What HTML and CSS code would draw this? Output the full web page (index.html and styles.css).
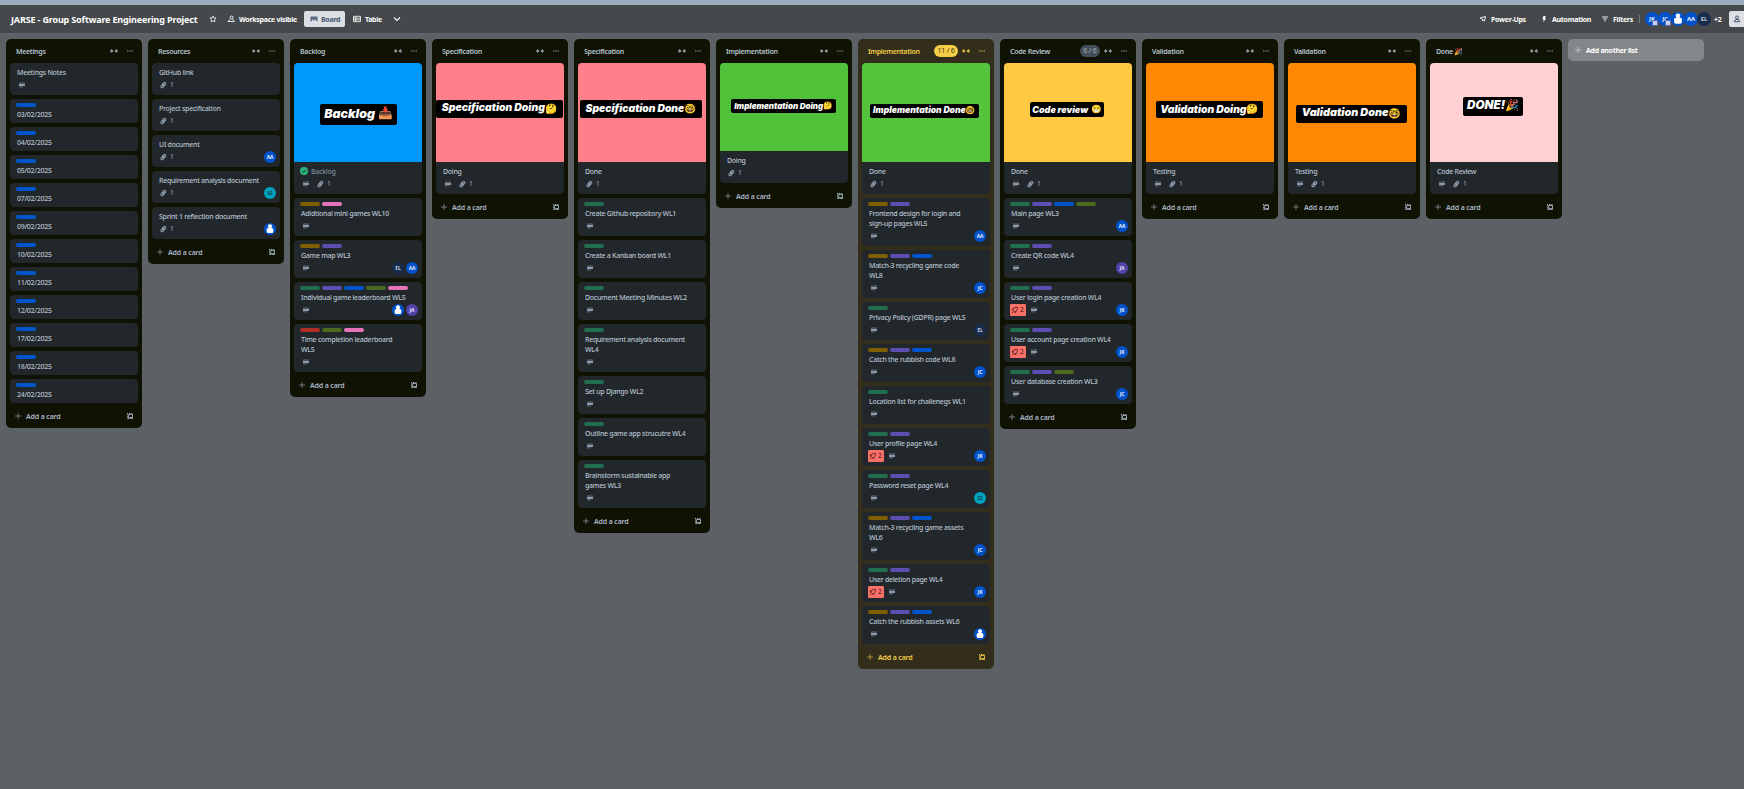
FILE: index.html
```html
<!DOCTYPE html>
<html lang="en">
<head>
<meta charset="utf-8">
<title>JARSE - Group Software Engineering Project</title>
<link rel="stylesheet" href="styles.css">
</head>
<body>
<svg class="sprite" aria-hidden="true">
  <symbol id="i-desc" viewBox="0 0 8 8"><path d="M1 1.300h6V3H1zM1 5h4v1.500H1z" fill="currentColor" opacity=".4"/><path d="M1 3h6v2H1z" fill="currentColor"/></symbol>
  <symbol id="i-clip" viewBox="0 0 8 8"><path d="M2.300 4.600L4.600 1.900A1.200 1.200 0 0 1 6.500 3.400L4 6.300A1.300 1.300 0 0 1 1.900 4.900M3.400 5.200L5.300 3" fill="none" stroke="currentColor" stroke-width="1.200"/></symbol>
  <symbol id="i-collapse" viewBox="0 0 8 8"><path d="M0 4h2M6 4h2" stroke="currentColor" stroke-width="1"/><path d="M1.200 2 3.500 4 1.200 6zM6.800 2 4.500 4l2.300 2z" fill="currentColor"/></symbol>
  <symbol id="i-more" viewBox="0 0 8 8"><path d="M1 3.500h1.400v1H1zM3.300 3.500h1.400v1H3.300zM5.600 3.500H7v1H5.600z" fill="currentColor" opacity=".85"/></symbol>
  <symbol id="i-plus" viewBox="0 0 8 8"><path d="M4 1v6M1 4h6" stroke="currentColor" stroke-width=".8" opacity=".75"/></symbol>
  <symbol id="i-tpl" viewBox="0 0 8 8"><path d="M2.600 2.500h3.900v4h-2M2.600 2.500v3h2v1M1 1.500h1M3 1.500h1.400M5.400 1.500h1.100M1.500 1v1.500M1.500 3.500v1.300M1.500 5.600v.9h2M5 5.500h1" fill="none" stroke="currentColor" stroke-width=".9"/></symbol>
  <symbol id="i-rocket" viewBox="0 0 8 8"><path d="M2.400 3C3.200 1.600 4.600 1.200 6.500 1.300c.1 1.900-.4 3.300-1.800 4.200L3.300 6 1.900 4.600zM2.400 2.600L1.200 3.200l.7 1.200M5.100 5.300L4.700 6.700 3.500 6M1 7l1-1" fill="none" stroke="currentColor" stroke-width=".9"/></symbol>
  <symbol id="i-person" viewBox="0 0 12 12"><circle cx="6" cy="3.300" r="2" fill="#fff"/><rect x="2.700" y="5" width="6.600" height="5" rx="1.500" fill="#fff"/></symbol>
</svg>
<div class="topstrip"></div>
<header class="bar">
  <h1 class="name">JARSE - Group Software Engineering Project</h1>
  <svg class="star" viewBox="0 0 8 8"><path d="M4 .9l.9 2 2.200.2-1.600 1.500.4 2.200L4 5.700 2.100 6.800l.4-2.200L.9 3.100l2.200-.2z" fill="none" stroke="currentColor" stroke-width=".8"/></svg>
  <div class="visible"><svg viewBox="0 0 8 8"><circle cx="4.600" cy="2.400" r="1.400" fill="none" stroke="currentColor" stroke-width=".9"/><path d="M.8 6.500L3.600 3.800M.8 6.500h6.400c0-1-.6-1.900-1.900-2.300" fill="none" stroke="currentColor" stroke-width=".9"/></svg><span>Workspace visible</span></div>
  <div class="boardbtn"><svg viewBox="0 0 8 8"><path d="M.5 1.500h7v4.700H6V4.500H5V5.300H3V4.500H2v1.700H.5z" fill="currentColor" opacity=".85"/></svg><span>Board</span></div>
  <div class="tablebtn"><svg viewBox="0 0 8 8"><path d="M.5 1.300h7v5.400h-7zM.5 3.100h7M.5 4.900h7M2.800 1.300v5.400" fill="none" stroke="currentColor" stroke-width=".8"/></svg><span>Table</span></div>
  <svg class="chev" viewBox="0 0 8 8"><path d="M1 2.500l3 3 3-3" fill="none" stroke="currentColor" stroke-width="1.100"/></svg>
  <div class="right">
    <div class="act a1"><svg viewBox="0 0 8 8"><path d="M1.200 3L6.500 1.500 5.400 6.200 3.900 4.600zM3.700 4.600v1.600" fill="none" stroke="currentColor" stroke-width=".9"/></svg><span>Power-Ups</span></div>
    <div class="act a2"><svg viewBox="0 0 8 8"><path d="M3.500 1h2.200L5 3.200h1.200L3.200 7.300l.5-3H2.300z" fill="currentColor"/></svg><span>Automation</span></div>
    <div class="act a3"><svg viewBox="0 0 8 8"><path d="M1 2h6M2.200 4h3.600M3.300 6h1.400" stroke="currentColor" stroke-width=".9"/></svg><span>Filters</span></div>
    <i class="sep"></i>
    <div class="team" id="team"></div>
    <span class="plus2">+2</span>
    <div class="share"><svg viewBox="0 0 8 8"><circle cx="4" cy="2.500" r="1.500" fill="none" stroke="currentColor"/><path d="M1.200 6.700c0-3 5.600-3 5.600 0z" fill="none" stroke="currentColor"/></svg><span>Share</span></div>
  </div>
</header>
<main class="board" id="board"></main>
<script src="app.js"></script>
</body>
</html>
```
FILE: styles.css
```css
* { box-sizing: border-box; }
html, body { margin: 0; height: 100%; }
body {
  width: 1744px; height: 789px; overflow: hidden;
  background: #5c6165;
  font: 500 7px/10px "Noto Sans", "Noto Color Emoji", sans-serif;
  letter-spacing: -.28px;
  color: #b6c2cf;
}
svg { display: block; flex: none; width: 8px; height: 8px; }
.sprite { position: absolute; width: 0; height: 0; }
.topstrip { height: 5px; background: #9dacbf; }
.bar {
  height: 28px; display: flex; align-items: center; overflow: hidden;
  background: #45494b; color: #fff; font-weight: 700; white-space: nowrap;
}
.bar > * { flex: none; }
.name { margin: 0 0 0 11px; width: 198px; font-size: 9px; line-height: 12px; padding-top: 1px; font-weight: 700; letter-spacing: -.16px; }
.star { margin-right: 10px; }
.visible, .tablebtn, .act { display: flex; align-items: center; gap: 4px; }
.visible { width: 77px; }
.boardbtn {
  display: flex; align-items: center; gap: 3px; width: 41px; height: 16px; padding-left: 6px;
  border-radius: 2px; background: #dcdfe4; color: #44546f;
}
.bar div > span { padding-top: 1px; }
.tablebtn { margin-left: 8px; width: 32px; }
.chev { margin-left: 8px; }
.right { margin-left: auto; display: flex; align-items: center; width: 265px; }
.right > * { flex: none; }
.a1, .a2 { width: 61px; }
.a3 { width: 38px; }
.sep { width: 1px; height: 8px; background: #777b7d; }
.team { display: flex; margin-left: 5px; }
.bar .team .av { margin-right: -1px; padding: 0; width: 14px; height: 14px; font-size: 6px; }
.team .av.admin::after {
  content: ""; position: absolute; right: 1px; bottom: 0; width: 4px; height: 4px;
  border-radius: 1px; background: #c9cdee; border: 1px solid #5f6cae;
}
.plus2 { margin-left: 4px; width: 15px; font-size: 7px; }
.share {
  display: flex; align-items: center; gap: 5px; width: 60px; height: 16px; padding-left: 4px;
  border-radius: 2px 0 0 2px; background: #dcdfe4; color: #44546f;
}
.board { display: flex; align-items: flex-start; gap: 6px; padding: 6px; width: 1744px; }
.list { flex: none; width: 136px; border-radius: 5px; background: #101204; padding: 0 4px 4px; }
.head { height: 24px; display: flex; align-items: center; padding: 1px 4px 0 6px; font-weight: 600; }
.head .t { flex: 1; white-space: nowrap; }
.head svg { margin-top: -1px; color: #9fadbc; }
.head .more { margin-left: 8px; }
.cnt {
  height: 12px; padding: 0 3.500px; margin-right: 4px; border-radius: 6px; margin-top: -1px;
  font-weight: 400; line-height: 12px; letter-spacing: -.2px; background: #454f59; color: #9fadbc;
}
.over { background: #332e1b; }
.over .head, .over .foot, .over .head svg { color: #f5cd47; }
.over .cnt { background: #f5cd47; color: #3a3420; }
.cards { display: flex; flex-direction: column; gap: 4px; }
.card { border-radius: 4px; background: #22272b; overflow: hidden; }
.cover { display: flex; justify-content: center; }
.plate {
  display: flex; align-items: center; justify-content: center; flex: none; border-radius: 2px;
  background: #000; color: #fff; white-space: nowrap; padding-bottom: 1px; letter-spacing: 0;
  font-family: Inter, "Noto Color Emoji", sans-serif; font-weight: 900; font-style: italic; line-height: 1;
}
.plate .em { font-style: normal; font-weight: 400; font-size: .95em; }
.body { padding: 4px 4px 4px 6px; }
.labels { display: flex; gap: 2px; height: 4px; margin-bottom: 2px; }
.labels i { width: 20px; height: 4px; border-radius: 2px; }
.title { padding: 1px 0 0 1px; margin-bottom: -1px; white-space: pre; }
.title.done { display: flex; gap: 3px; padding-left: 0; color: #7e8a97; }
.badges { display: flex; align-items: center; height: 12px; margin-top: 2px; color: #8c9bab; font-size: 6.5px; }
.badges .d { margin: 0 5px 0 2px; }
.badges .clip { display: flex; align-items: center; gap: 3px; margin-left: 1px; }
.rk { display: flex; align-items: center; gap: 1px; width: 16px; height: 12px; padding-left: 1px; background: #f87168; color: #5d1f1a; border-radius: 1px; margin-right: 2px; }
.avs { margin-left: auto; display: flex; gap: 2px; }
.av {
  position: relative; width: 12px; height: 12px; border-radius: 50%; display: flex; align-items: center; justify-content: center;
  font-size: 5px; line-height: 1; font-weight: 700; letter-spacing: -.1px;
}
.av svg { width: 100%; height: 100%; }
.foot { height: 21px; display: flex; align-items: center; padding: 5px 4px 0; font-weight: 600; letter-spacing: -.15px; color: #a9b7c6; }
.foot span { margin-left: 4px; flex: 1; padding-top: 1px; }
.add {
  width: 136px; height: 22px; border-radius: 5px; background: #838789; color: #fff;
  display: flex; align-items: center; padding-left: 6px; gap: 4px; font-weight: 700;
}
.add svg { color: #e4e6e6; }
.add span { padding-top: 1px; }
```
FILE: app.js
```js
const COLORS = { b: '#0055cc', g: '#216e4e', p: '#5e4db2', y: '#7f5f01', k: '#e774bb', l: '#4c6b1f', r: '#ae2e24' };
const icon = (id, cls = '') => `<svg class="${cls}"><use href="#i-${id}"/></svg>`;

// Card fields: title, labels, badges (d description, c attachment, r rocket), members, done flag
const c = (t, l = '', b = '', m = '', done = false) => ({ t, l, b, m, done });
// Cover fields: colour, height, plate left/top/width/height, font size, caption, emoji
const cover = (col, h, x, y, w, ph, fs, txt, em, gap = 0) => ({ col, h, x, y, w, ph, fs, txt, em, gap });

const LISTS = [
  { t: 'Meetings', cards: [c('Meetings Notes', '', 'd'), ...['03', '04', '05', '07', '09', '10', '11', '12', '17', '18', '24'].map(d => c(d + '/02/2025', 'b'))] },
  { t: 'Resources', cards: [c('GitHub link', '', 'c'), c('Project specification', '', 'c'), c('UI document', '', 'c', 'AA'), c('Requirement analysis document', '', 'c', 'SS'), c('Sprint 1 reflection document', '', 'c', '*')] },
  { t: 'Backlog', cover: cover('#0098fb', 99, 26, 41, 77, 21, 12.400, 'Backlog', '📥', 3), cards: [c('Backlog', '', 'dc', '', true), c('Adidtional mini games WL10', 'yk', 'd'), c('Game map WL3', 'yp', 'd', 'EL AA'), c('Individual game leaderboard WL5', 'gpblk', 'd', '* JA'), c('Time completion leaderboard\nWL5', 'rlk', 'd')] },
  { t: 'Specification', cover: cover('#ff7f8a', 99, 0, 37, 127, 18, 10.4, 'Specification Doing', '🤔'), cards: [c('Doing', '', 'dc')] },
  { t: 'Specification', cover: cover('#ff7f8a', 99, 2, 37, 122, 18, 10.3, 'Specification Done', '🤓'), cards: [c('Done', '', 'c'), c('Create Github repository WL1', 'g', 'd'), c('Create a Kanban board WL1', 'g', 'd'), c('Document Meeting Minutes WL2', 'g', 'd'), c('Requirement analysis document\nWL4', 'g', 'd'), c('Set up Django WL2', 'g', 'd'), c('Outline game app strucutre WL4', 'g', 'd'), c('Brainstorm sustainable app\ngames WL3', 'g', 'd')] },
  { t: 'Implementation', cover: cover('#50c23a', 88, 11, 36, 105, 14, 8, 'Implementation Doing', '🤔'), cards: [c('Doing', '', 'c')] },
  { t: 'Implementation', count: '11 / 6', over: true, cover: cover('#55c43c', 99, 8, 41, 109, 14, 8.600, 'Implementation Done', '🤓'), cards: [c('Done', '', 'c'), c('Frontend design for login and\nsign-up pages WL5', 'yp', 'd', 'AA'), c('Match-3 recycling game code\nWL8', 'ypb', 'd', 'JC'), c('Privacy Policy (GDPR) page WL5', 'g', 'd', 'EL'), c('Catch the rubbish code WL8', 'ypb', 'd', 'JC'), c('Location list for challenegs WL1', 'g', 'd'), c('User profile page WL4', 'gp', 'rd', 'JK'), c('Password reset page WL4', 'gp', 'd', 'SS'), c('Match-3 recycling game assets\nWL6', 'ypb', 'd', 'JC'), c('User deletion page WL4', 'gp', 'rd', 'JK'), c('Catch the rubbish assets WL6', 'ypb', 'd', '*')] },
  { t: 'Code Review', count: '6 / 6', cover: cover('#ffc942', 99, 26, 39, 74, 15, 9, 'Code review', '😁', 3), cards: [c('Done', '', 'dc'), c('Main page WL3', 'gpbl', 'd', 'AA'), c('Create QR code WL4', 'gp', 'd', 'JA'), c('User login page creation WL4', 'gp', 'rd', 'JK'), c('User account page creation WL4', 'gp', 'rd', 'JK'), c('User database creation WL3', 'gpl', 'd', 'JC')] },
  { t: 'Validation', cover: cover('#ff8803', 99, 10, 38, 107, 17, 10.300, 'Validation Doing', '🤔'), cards: [c('Testing', '', 'dc')] },
  { t: 'Validation', cover: cover('#ff8803', 99, 8, 42, 111, 18, 10.800, 'Validation Done', '🤓'), cards: [c('Testing', '', 'dc')] },
  { t: 'Done 🎉', cover: cover('#ffd0d2', 99, 33, 34, 60, 19, 11.700, 'DONE!', '🎉'), cards: [c('Code Review', '', 'dc')] },
];

const AV = { EL: ['#172b4d', '#c3cddb'], SS: ['#00a3bf', '#0b4757'], JA: ['#5243aa', '#e5e0fa'] };
const avatar = (m, cls = '') => {
  const [bg, fg] = AV[m] || ['#0052cc', '#e6eefb'];
  return `<span class="av ${cls}" style="background:${bg};color:${fg}">${m === '*' ? icon('person') : m}</span>`;
};

const coverHtml = v => v ? `<div class="cover" style="background:${v.col};height:${v.h}px;padding:${v.y}px ${128 - v.x - v.w}px 0 ${v.x}px"><div class="plate" style="width:${v.w}px;height:${v.ph}px;font-size:${v.fs}px"><span class="cap">${v.txt}</span><span class="em" style="margin-left:${v.gap}px">${v.em}</span></div></div>` : '';

const badges = k => {
  if (!k.b) return '';
  const parts = [...k.b].map(x => x === 'd' ? icon('desc', 'd') : x === 'c' ? `<span class="clip">${icon('clip')}1</span>` : `<span class="rk">${icon('rocket')}2</span>`).join('');
  return `<div class="badges">${parts}<span class="avs">${k.m ? k.m.split(' ').map(m => avatar(m)).join('') : ''}</span></div>`;
};

const card = (k, v) => `<article class="card">${coverHtml(v)}<div class="body">
${k.l ? `<div class="labels">${[...k.l].map(x => `<i style="background:${COLORS[x]}"></i>`).join('')}</div>` : ''}
<div class="title${k.done ? ' done' : ''}">${k.done ? '<svg viewBox="0 0 8 8"><circle cx="4" cy="4" r="4" fill="#2bb57c"/><path d="M2.200 4.100l1.300 1.300 2.400-2.600" fill="none" stroke="#1d2125"/></svg>' : ''}<span>${k.t}</span></div>${badges(k)}</div></article>`;

document.getElementById('team').innerHTML = ['JK', 'JC', '*', 'AA', 'EL'].map((m, i) => avatar(m, i < 2 ? 'admin' : '')).join('');
document.getElementById('board').innerHTML = LISTS.map(L => `<section class="list${L.over ? ' over' : ''}">
<div class="head"><span class="t">${L.t}</span>${L.count ? `<span class="cnt">${L.count}</span>` : ''}${icon('collapse')}${icon('more', 'more')}</div>
<div class="cards">${L.cards.map((k, i) => card(k, i ? null : L.cover)).join('')}</div>
<div class="foot">${icon('plus')}<span>Add a card</span>${icon('tpl')}</div></section>`).join('') + `<div class="add">${icon('plus')}<span>Add another list</span></div>`;
```
